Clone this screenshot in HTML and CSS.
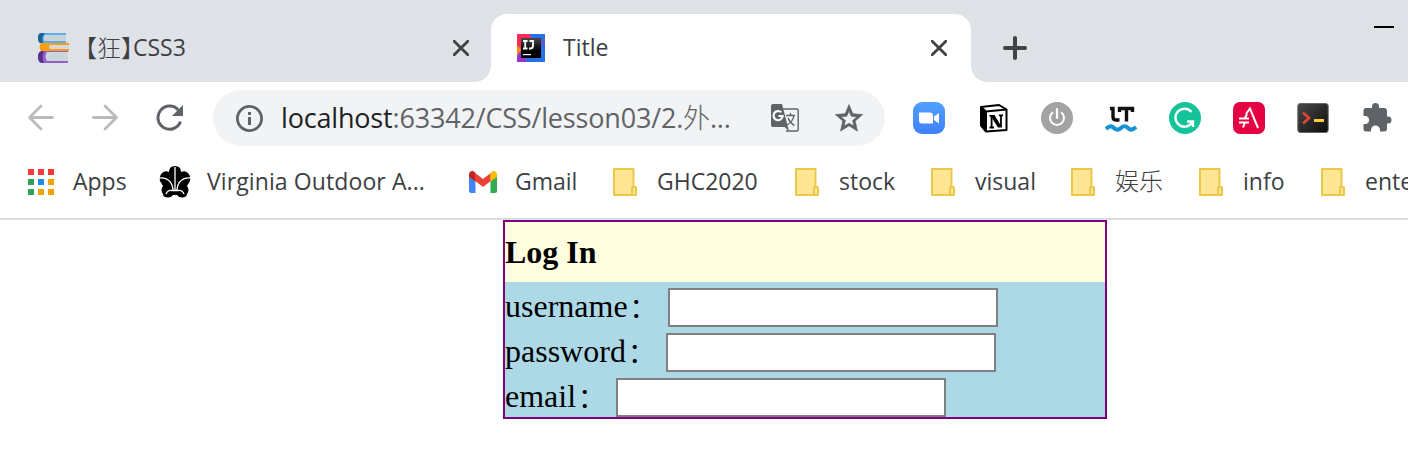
FILE: index.html
```html
<!DOCTYPE html>
<html lang="en">
<head>
<meta charset="utf-8">
<title>Title</title>
<link rel="stylesheet" href="styles.css">
</head>
<body>
<svg class="defs" width="0" height="0">
  <symbol id="folder" viewBox="0 0 24 28"><path d="M1 1H20.500V20H22.800V27H1Z" fill="#ffe694" stroke="#ebc74a" stroke-width="2" stroke-linejoin="round"/><rect x="19" y="19" width="4" height="8" rx="1" fill="#ffe694" stroke="#ebc74a" stroke-width="2"/></symbol>
  <symbol id="close" viewBox="0 0 16 16"><path d="M1.200 1.200 14.800 14.800M14.800 1.200 1.200 14.800" stroke="#3f4346" stroke-width="2.800" stroke-linecap="round"/></symbol>
</svg>
<header class="tabs">
  <div class="tab tab-idle">
    <svg width="32" height="32" viewBox="0 0 32 32"><path d="M4 1H29V11H4Q1 11 1 6T4 1Z" fill="#5dade9"/><path d="M5 1Q1 1 1 6T4 11H6Q4 5 8 1Z" fill="#1b629b"/><path d="M8 3H29V9H8Q5 6 8 3Z" fill="#c8d3da"/><path d="M4 11H32V19H4Q1 15 4 11Z" fill="#ff9d10"/><path d="M13 13H32V17H13Q11 15 13 13Z" fill="#d3dade"/><path d="M5 19H31V31H5Q1 31 1 25T5 19Z" fill="#925fcb"/><path d="M5 19H7Q4 25 7 31H5Q1 30 1 25T5 19Z" fill="#55318a"/><path d="M10 20H31V29H10Q7 24 10 20Z" fill="#ccd5dc"/></svg>
    <span class="tab-title zh-title"><span class="zh-part">【狂】</span>CSS3</span>
    <svg class="tab-close" width="16" height="16"><use href="#close"/></svg>
  </div>
  <div class="tab tab-active">
    <svg width="28" height="28" viewBox="0 0 28 28"><path fill="#2870e8" d="M0 0h28v28H0z"/><path fill="#fc2a57" d="M0 0h12l4 5v8L4 15 0 12z"/><path fill="#ff8a1c" d="M0 11l5 5-3 7-2-2z"/><path fill="#9a35c8" d="M0 28v-6l4-6 6 12z"/><path fill="#6654c8" d="M28 4v9l-5-5z"/><linearGradient id="ij" x2="0" y2="1"><stop stop-color="#484848"/><stop offset=".65"/></linearGradient><path fill="url(#ij)" d="M4 4h20v20H4z"/><path d="M6 7h4.500M8.200 7v7M6 14.500h4.500M12.500 7H16v4.500q0 3-2.500 3h-1.500" stroke="#fff" stroke-width="1.800" fill="none"/><path fill="#fff" d="M6 20h8v1.200H6z"/></svg>
    <span class="tab-title plain-title">Title</span>
    <svg class="tab-close" width="16" height="16"><use href="#close"/></svg>
  </div>
  <svg class="new-tab" width="24" height="24" viewBox="0 0 24 24"><path d="M12 2V22M2 12H22" stroke="#3f4346" stroke-width="4" stroke-linecap="round"/></svg>
  <div class="minimize"></div>
</header>
<nav class="toolbar">
  <svg class="back" width="28" height="28" viewBox="0 0 28 28"><path d="M25.500 13.500H3M14 2 2.500 13.500 14 25" fill="none" stroke="#bababc" stroke-width="2.800" stroke-linecap="round" stroke-linejoin="round"/></svg>
  <svg class="forward" width="28" height="28" viewBox="0 0 28 28"><path d="M2.500 13.500H25M14 2 25.500 13.500 14 25" fill="none" stroke="#bababc" stroke-width="2.800" stroke-linecap="round" stroke-linejoin="round"/></svg>
  <svg class="reload" width="28" height="28" viewBox="0 0 28 28"><path d="M25.500 17.500A11.600 11.600 0 1 1 23.300 6" fill="none" stroke="#5f6368" stroke-width="3"/><path d="M28 1V12H17Z" fill="#5f6368"/></svg>
  <div class="address">
    <svg width="28" height="28" viewBox="0 0 28 28"><circle cx="14.500" cy="14.500" r="12.100" fill="none" stroke="#5f6368" stroke-width="2.800"/><path d="M13 8h3v3h-3zM13 13h3v8h-3z" fill="#5f6368"/></svg>
    <span class="url"><b class="host">localhost</b>:63342/CSS/lesson03/2.<span class="url-zh">外</span>...</span>
    <svg class="translate" width="28" height="28" viewBox="0 0 28 28"><path d="M11 5H25.500Q27.200 5 27.200 7V25Q27.200 27 25.500 27H15" fill="#f1f3f4" stroke="#5f6368" stroke-width="1.400"/><path d="M15 11.500h9M19.500 9v2.500M16 21q6-3.500 7-9.500M17 14q2 5 6.500 7.500" stroke="#5f6368" stroke-width="1.400" fill="none"/><path d="M2 0H11L18 27 13.500 23H2Q0 23 0 21V2Q0 0 2 0Z" fill="#5f6368"/><path d="M10.300 8.300A4.600 4.600 0 1 0 11.700 12H7.500" fill="none" stroke="#fff" stroke-width="2.200"/></svg>
    <svg class="star" width="30" height="30" viewBox="0 0 24 24"><path fill="#5f6368" stroke="#5f6368" stroke-width=".5" d="M23 9.240l-7.910-.68L12 1.200 8.910 8.570 1 9.240l6 5.200L5.200 22.500 12 18.270l6.800 4.230-1.790-8.060 5.990-5.200zM12 16.100l-3.900 2.350 1.040-4.430-3.440-2.980 4.530-.39L12 6.470l1.780 4.190 4.530.39-3.440 2.980 1.040 4.430L12 16.100z"/></svg>
  </div>
  <div class="extensions">
    <svg viewBox="0 0 32 32"><linearGradient id="zm" x2="0" y2="1"><stop stop-color="#50a0ff"/><stop offset="1" stop-color="#4080fc"/></linearGradient><rect width="32" height="32" rx="9" fill="url(#zm)"/><path d="M6 10.500H17Q20 10.500 20 13.500V21.500H9Q6 21.500 6 18.500ZM21 14.500 26 11V21.500L21 18Z" fill="#fff"/></svg>
    <svg viewBox="0 0 32 32"><path d="M4 5 22 3 29.500 7.500V28L9 29.500 4 23.500Z" fill="#fff" stroke="#000" stroke-width="2" stroke-linejoin="round"/><path d="M4 5 9 9.500 29.500 7.500M9 9.500V29.500" fill="none" stroke="#000" stroke-width="2"/><path d="M4 5 9 9.500V29.500L4 23.500Z" fill="#000"/><path d="M12.500 13.800h5M22 13.300h4M12.500 25.500h4.500M14.600 13.500v12M24 13v12" stroke="#000" stroke-width="1.800"/><path d="M13 13h4.500L25 25.500h-4Z"/></svg>
    <svg viewBox="0 0 32 32"><circle cx="16" cy="16" r="16" fill="#a3a3a3"/><path d="M12 10.200A7 7 0 1 0 20 10.200" fill="none" stroke="#fff" stroke-width="2"/><path d="M16 7v9" stroke="#fff" stroke-width="2.200" stroke-linecap="round"/></svg>
    <svg viewBox="0 0 32 32"><path d="M5 6.500h3v8q0 3.500 3 3.500h3.500M14.500 10V6.500h13V10M21.500 6.500v13" fill="none" stroke="#111" stroke-width="3.400"/><path d="M1 27q4.500-4.500 8-1t7 0 7 0 8-1" fill="none" stroke="#1594d3" stroke-width="4"/></svg>
    <svg viewBox="0 0 32 32"><circle cx="16" cy="16" r="16" fill="#15c39a"/><path d="M22.500 10A9 9 0 1 0 22.800 21M18 19.500H24V25" fill="none" stroke="#fff" stroke-width="2.400"/></svg>
    <svg viewBox="0 0 32 32"><rect width="32" height="32" rx="7" fill="#e50044"/><path d="M13 12 17 6.500 25 26M6 16.500H16M6 20.500H16M12 16 14 12M10 25.500 12 20.500" fill="none" stroke="#fff" stroke-width="2"/></svg>
    <svg viewBox="0 0 32 32"><linearGradient id="tm" x2="1" y2="1"><stop stop-color="#4b4b4b"/><stop offset="1" stop-color="#0b0b0b"/></linearGradient><rect x=".8" y="1.500" width="30.400" height="29" rx="2.500" fill="url(#tm)" stroke="#666"/><path d="M6 10.500 12 16 6 21.500" fill="none" stroke="#dd4434" stroke-width="2.800"/><path d="M17 17h10v3H17z" fill="#ffcb39"/></svg>
    <svg viewBox="0 0 32 32"><path fill="#5f6368" d="M5 6H11V4.500A3.500 3.500 0 0 1 18 4.500V6H23Q26 6 26 9V14.500H27A3.500 3.500 0 0 1 27 21.500H26V26.500Q26 29.500 23 29.500H19V28A4 4 0 0 0 10 28V29.500H5Q2.500 29.500 2.500 27V22H4A4 4 0 0 0 4 14H2.500V9Q2.500 6 5 6Z"/></svg>
  </div>
</nav>
<nav class="bookmarks">
  <a class="mark apps"><svg width="26" height="26" viewBox="0 0 26 26"><path fill="#f43b36" d="M0 0h6v6H0zM10 0h6v6h-6zM20 0h6v6h-6z"/><path fill="#33a05b" d="M0 10h6v6H0zM0 20h6v6H0z"/><path fill="#2189f3" d="M10 10h6v6h-6z"/><path fill="#f0a400" d="M20 10h6v6h-6zM10 20h6v6h-6zM20 20h6v6h-6z"/></svg><span class="label">Apps</span></a>
  <a class="mark outdoor"><svg width="32" height="32" viewBox="0 0 32 32"><path d="M10 6Q10 0 16 0T22 6Q26 4 29 7T31 15L28 20Q31 24 28 28 28 31 24 31.500T18 29H14Q12 32 8 31.500T4 28Q1 24 4 20L1 15Q0 10 3 7T10 6Z"/><path d="M16 1V25M0 12Q13 11 14.200 25M32 12Q19 11 17.800 25M7 28Q9 23.500 13 24.500L19 24.500Q23 23.500 25 28" fill="none" stroke="#fff" stroke-width="1.300"/></svg><span class="label">Virginia Outdoor A...</span></a>
  <a class="mark gmail"><svg width="28" height="22" viewBox="0 0 28 22"><path fill="#4285f4" d="M0 4 6.500 8V22H2Q0 22 0 20Z"/><path fill="#34a853" d="M28 4 21.500 8V22H26Q28 22 28 20Z"/><path fill="#ea4335" d="M6.300 2 14 8 21.700 2V10L14 16 6.300 10Z"/><path fill="#c5221f" d="M0 4Q0 0 3.500 0Q5 0 6.500 2V10.500L0 6Z"/><path fill="#fbbc04" d="M28 4Q28 0 24.500 0Q23 0 21.500 2V10.500L28 6Z"/></svg><span class="label">Gmail</span></a>
  <a class="mark ghc"><svg width="24" height="28"><use href="#folder"/></svg><span class="label">GHC2020</span></a>
  <a class="mark stock"><svg width="24" height="28"><use href="#folder"/></svg><span class="label">stock</span></a>
  <a class="mark visual"><svg width="24" height="28"><use href="#folder"/></svg><span class="label">visual</span></a>
  <a class="mark fun"><svg width="24" height="28"><use href="#folder"/></svg><span class="label zh">娱乐</span></a>
  <a class="mark info"><svg width="24" height="28"><use href="#folder"/></svg><span class="label">info</span></a>
  <a class="mark enter"><svg width="24" height="28"><use href="#folder"/></svg><span class="label">ente</span></a>
</nav>
<main class="login">
  <h2 class="login-title">Log In</h2>
  <form class="login-form">
    <label class="field">username<span class="colon">：</span><input class="input" type="text"></label>
    <label class="field">password<span class="colon">：</span><input class="input" type="text"></label>
    <label class="field">email<span class="colon">：</span><input class="input" type="text"></label>
  </form>
</main>
</body>
</html>
```
FILE: styles.css
```css
* { box-sizing: border-box; }
body { margin: 0; width: 1408px; height: 472px; overflow: hidden; background: #fff; color: #3c4043; font: 23px "Open Sans", "Noto Sans CJK SC", sans-serif; }
svg { display: block; flex: none; }
.defs { position: absolute; }
.tabs { display: flex; height: 82px; background: #dee1e6; }
.tab { display: flex; align-items: center; }
.tab-idle { width: 491px; height: 82px; padding: 14px 22px 0 37px; border-bottom-right-radius: 16px; background: #dee1e6; }
.tab-active { position: relative; width: 480px; height: 68px; margin-top: 14px; padding: 0 24px 0 26px; border-radius: 16px 16px 0 0; background: #fff; }
.tab-active::before, .tab-active::after { content: ""; position: absolute; bottom: 0; width: 16px; height: 16px; }
.tab-active::before { right: 100%; background: radial-gradient(circle at 0 0, transparent 15.5px, #fff 16px); }
.tab-active::after { left: 100%; background: radial-gradient(circle at 100% 0, transparent 15.5px, #fff 16px); }
.tab-title { display: flex; align-items: center; height: 34px; margin-bottom: 2px; line-height: 34px; white-space: nowrap; }
.zh-title { margin-left: 16px; }
.zh-part { font-family: "Noto Sans CJK SC", sans-serif; font-size: 24px; font-weight: 300; font-feature-settings: "halt"; }
.plain-title { margin-left: 18px; }
.tab-close { margin-left: auto; }
.new-tab { margin: 36px 0 0 32px; }
.minimize { width: 20px; height: 2px; margin: 26px 14px 0 auto; background: #000; }
.toolbar { display: flex; align-items: center; height: 72px; padding-left: 27px; }
.forward { margin-left: 36px; }
.reload { margin-left: 36px; }
.address { display: flex; align-items: center; width: 672px; height: 56px; margin-left: 30px; padding: 0 21px 0 22px; border-radius: 28px; background: #f1f3f4; }
.url { width: 456px; margin-left: 18px; padding-bottom: 1px; color: #5f6368; font-size: 27px; letter-spacing: -0.18px; line-height: 38px; white-space: nowrap; }
.url-zh { font-weight: 300; }
.host { color: #202124; font-weight: 400; }
.translate { margin-left: 34px; }
.star { margin-left: auto; }
.extensions { display: flex; gap: 32px; margin-left: 28px; }
.extensions svg { width: 32px; height: 32px; }
.bookmarks { display: flex; align-items: center; height: 66px; padding: 0 0 8px 28px; border-bottom: 2px solid #dadce0; white-space: nowrap; }
.mark { display: flex; flex: none; align-items: center; gap: 20px; height: 56px; }
.label { padding-bottom: 2px; }
.apps { width: 131px; gap: 19px; }
.outdoor { width: 310px; gap: 16px; letter-spacing: 0.1px; }
.gmail { width: 144px; gap: 18px; }
.ghc { width: 182px; }
.stock { width: 136px; }
.visual { width: 140px; }
.fun { width: 128px; }
.info { width: 122px; }
.zh { padding-bottom: 6px; font-size: 24px; font-weight: 300; }
.login { width: 604px; height: 199px; margin-left: 503px; border: 2px solid purple; background: lightblue; color: #000; font: 32px/45px "Liberation Serif", "Noto Sans CJK SC", serif; }
.login-title { margin: 0; height: 60px; background: lightyellow; font-size: 32px; line-height: 60px; }
.field { display: flex; height: 45px; padding-top: 2px; white-space: nowrap; }
.colon { width: 40px; padding-left: 2px; font-size: 27px; line-height: 50px; }
.input { width: 330px; height: 39px; margin-top: 4px; padding: 0; border: 2px solid #808080; background: #fff; }
```
